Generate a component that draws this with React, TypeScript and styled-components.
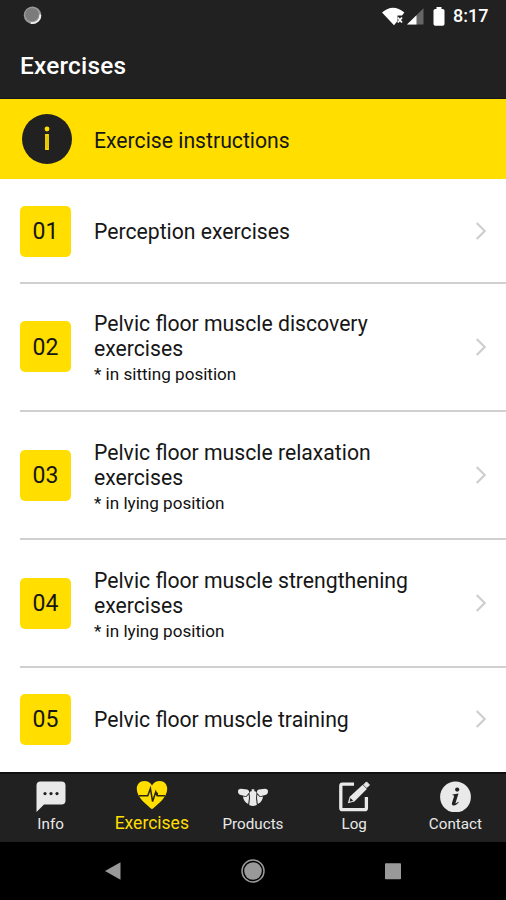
import React from 'react';
import styled, { createGlobalStyle } from 'styled-components';

const GlobalStyle = createGlobalStyle`
  * { box-sizing: border-box; }
  body { margin: 0; background: #fff; font-family: Roboto, sans-serif; }
`;

const Screen = styled.div`
  width: 506px;
  height: 900px;
  display: flex;
  flex-direction: column;
  overflow: hidden;
  background: #fff;
`;

const StatusBar = styled.div`
  height: 32px;
  flex: none;
  background: #212121;
  color: #fff;
  display: flex;
  align-items: center;
  justify-content: space-between;
  padding: 0 18px 0 23px;
`;

const StatusIcons = styled.div`
  display: flex;
  align-items: center;
`;

const Clock = styled.span`
  font-size: 18px;
  font-weight: 500;
  line-height: 32px;
  width: 35px;
  margin-left: 8px;
  white-space: nowrap;
`;

const Header = styled.header`
  height: 67px;
  flex: none;
  background: #212121;
  border-bottom: 1px solid #141420;
  padding: 18px 20px 0;
`;

const Title = styled.h1`
  margin: 0;
  color: #fff;
  font-size: 24.4px;
  line-height: 32px;
  font-weight: 500;
  letter-spacing: 0.2px;
`;

const Banner = styled.div`
  height: 80px;
  flex: none;
  background: #ffde00;
  display: flex;
  align-items: center;
  padding: 2px 22px 0;
  gap: 22px;
`;

const InfoDisc = styled.div`
  width: 50px;
  height: 50px;
  border-radius: 50%;
  background: #212121;
  display: grid;
  place-items: center;
  margin-bottom: 2px;
`;

const Label = styled.div`
  font-size: 21.2px;
  line-height: 25px;
  color: #161616;
  white-space: pre-line;
`;

const List = styled.main`
  height: 593px;
  flex: none;
  padding-left: 20px;
`;

const Row = styled.div<{ $tall?: boolean; $last?: boolean }>`
  height: ${p => (p.$tall ? '128.3px' : p.$last ? '102px' : '104.6px')};
  border-bottom: ${p => (p.$last ? 'none' : '2px solid #d0d0d0')};
  display: flex;
  align-items: center;
  padding-top: ${p => (p.$tall || p.$last ? '0' : '2px')};
  padding-right: 19px;
`;

const NumberTile = styled.div`
  width: 51px;
  height: 51px;
  flex: none;
  border-radius: 5px;
  background: #ffde00;
  color: #161616;
  display: grid;
  place-items: center;
  font-size: 23px;
  line-height: 27px;
  padding-top: 1px;
  margin-right: 23px;
`;

const RowText = styled.div<{ $noted: boolean }>`
  flex: 1;
  padding-top: ${p => (p.$noted ? '5px' : '1px')};
`;

const Note = styled.div`
  font-size: 17.1px;
  line-height: 20px;
  padding-top: 3px;
  height: 26px;
  color: #111;
`;

const TabBar = styled.nav`
  height: 70px;
  flex: none;
  background: #212121;
  border-top: 2px solid #101010;
  display: grid;
  grid-template-columns: repeat(5, 1fr);
`;

const Tab = styled.div<{ $active?: boolean }>`
  display: flex;
  flex-direction: column;
  align-items: center;
  color: ${p => (p.$active ? '#ffde00' : '#e9e9e9')};
  font-size: ${p => (p.$active ? '17.5px' : '15.2px')};
  line-height: 20px;
  padding-top: ${p => (p.$active ? '5px' : '6px')};
  svg { display: block; margin-bottom: 2px; }
`;

const SystemNav = styled.div`
  height: 58px;
  flex: none;
  background: #000;
  display: flex;
  justify-content: center;
  align-items: center;
  gap: 116px;
  svg { display: block; }
`;

const Spinner = () => (
  <svg width="20" height="20" viewBox="0 0 20 20">
    <circle cx="9.5" cy="9.2" r="8.7" fill="#999" />
    <path d="M17.3 8.5A8 8 0 0 1 7.8 17" fill="none" stroke="#eee" strokeWidth="1.8" />
    <circle cx="9" cy="8.6" r="6.7" fill="#7b7b7b" />
  </svg>
);

const StatusGlyphs = () => (
  <svg width="64" height="24" viewBox="380 3 64 24">
    <path d="M381 11.5Q392 2 403.4 11.5L401 14.5H396.5V20L393 24.2Z" fill="#fff" />
    <path d="m396.8 16.5 4.2 5m0-5-4.2 5" stroke="#fff" strokeWidth="1.8" />
    <path d="M422.5 7.2V23.5H406Z" fill="#666" />
    <path d="M415.5 14.2V23.5H406Z" fill="#fff" />
    <path d="M435.5 6h5v2h1.2q1.8 0 1.8 1.8V23q0 1.8-1.8 1.8h-7.4q-1.8 0-1.8-1.8V9.8q0-1.8 1.8-1.8h1.2Z" fill="#fff" />
  </svg>
);

const InfoGlyph = () => (
  <svg width="10" height="26" viewBox="0 0 10 26">
    <circle cx="5" cy="3" r="2.4" fill="#ffde00" />
    <path d="M5 8v16" stroke="#ffde00" strokeWidth="3.8" />
    <path d="M5 9.5v13" stroke="#c4ad10" strokeWidth="0.9" />
  </svg>
);

const Chevron = () => (
  <svg width="12" height="20" viewBox="0 0 12 20">
    <path d="m1.7 2 8 8-8 8" fill="none" stroke="#cecece" strokeWidth="2.2" />
  </svg>
);

const ChatIcon = () => (
  <svg width="32" height="32" viewBox="0 0 32 32">
    <path d="M5.5 1.5h21q4 0 4 4v15q0 4-4 4H9L1.5 32V5.5q0-4 4-4Z" fill="#e9e9e9" />
    <g fill="#212121"><circle cx="10" cy="13.6" r="1.6" /><circle cx="16" cy="13.6" r="1.6" /><circle cx="22" cy="13.6" r="1.6" /></g>
  </svg>
);

const HeartIcon = () => (
  <svg width="32" height="32" viewBox="0 0 32 32">
    <path d="M16 30.2C10.5 25.6 1 18.6.8 10.2.6 5.4 4 2 8.2 2 12 2 14.8 4 16 6.6 17.2 4 20 2 23.8 2c4.2 0 7.6 3.4 7.4 8.2C31 18.6 21.5 25.6 16 30.2Z" fill="#ffde00" />
    <path d="M3 16.7h8.8l2.6-7.2 2.2 13 3.2-9.7 1.4 3.9H29" fill="none" stroke="#282411" strokeWidth="1.5" />
    <circle cx="20.6" cy="14.7" r="1.5" fill="#282411" />
  </svg>
);

const ProductIcon = () => (
  <svg width="32" height="32" viewBox="0 0 32 32" fill="#e9e9e9">
    <path d="M1 11.2Q1 8.8 4 8.7l6.2.8q2.2.4 2 3L9 16.3 3.7 15Q1 14.4 1 11.2Z" />
    <path d="M31 11.2Q31 8.8 28 8.7l-6.2.8q-2.2.4-2 3l3.2 3.8 5.3-1.3Q31 14.4 31 11.2Z" />
    <path d="M13.8 11.2h1l-.2-2h2.8l-.2 2h1q1.3.4 1.3 2L19 18l.8 7q-3.8 1.8-7.6 0l.8-7-.5-4.8q0-1.6 1.3-2Z" />
    <path d="m6 16.4 3.2.7 2.5-2.5.3 3.5-.8 5.9Q6.5 21.5 6 16.4ZM26 16.4l-3.2.7-2.5-2.5-.3 3.5.8 5.9q4.7-2.5 5.2-7.6Z" />
  </svg>
);

const EditIcon = () => (
  <svg width="32" height="32" viewBox="0 0 32 32">
    <path d="M16 4.2H4.5Q2.8 4.2 2.8 5.9v22q0 1.7 1.7 1.7h22.2q1.7 0 1.7-1.7V17" fill="none" stroke="#e9e9e9" strokeWidth="3.3" />
    <path d="m25.8 4.6 2.7-2.7 3 3-2.7 2.7Z" fill="#e9e9e9" stroke="#e9e9e9" strokeLinejoin="round" />
    <path d="m24.7 4.7 4.2 4.2L16.4 21.4l-6.6 1.8 1.9-6.5Z" fill="#e9e9e9" />
    <path d="m12.4 18 2.8 2.8-3.5 1Z" fill="#212121" />
  </svg>
);

const ContactIcon = () => (
  <svg width="32" height="32" viewBox="0 0 32 32">
    <circle cx="16.5" cy="17" r="15.4" fill="#e9e9e9" />
    <circle cx="18.2" cy="9.6" r="2.1" fill="#212121" />
    <path d="M13.5 14.4l6-1-3 9.6q-.2 1.3 2.7-1.3l.5.7q-3.2 3.5-5.3 3.2-2.1-.4-1.3-3l2-6.3q.4-1.1-1.6-1Z" fill="#212121" />
  </svg>
);

const exercises = [
  { no: '01', title: 'Perception exercises' },
  { no: '02', title: 'Pelvic floor muscle discovery\nexercises', note: '* in sitting position' },
  { no: '03', title: 'Pelvic floor muscle relaxation\nexercises', note: '* in lying position' },
  { no: '04', title: 'Pelvic floor muscle strengthening\nexercises', note: '* in lying position' },
  { no: '05', title: 'Pelvic floor muscle training' },
];

const tabs = [
  { name: 'Info', Icon: ChatIcon },
  { name: 'Exercises', Icon: HeartIcon, active: true },
  { name: 'Products', Icon: ProductIcon },
  { name: 'Log', Icon: EditIcon },
  { name: 'Contact', Icon: ContactIcon },
];

export default function App() {
  return (
    <>
      <GlobalStyle />
      <Screen>
        <StatusBar>
          <Spinner />
          <StatusIcons>
            <StatusGlyphs />
            <Clock>8:17</Clock>
          </StatusIcons>
        </StatusBar>
        <Header><Title>Exercises</Title></Header>
        <Banner>
          <InfoDisc><InfoGlyph /></InfoDisc>
          <Label>Exercise instructions</Label>
        </Banner>
        <List>
          {exercises.map(({ no, title, note }, i) => (
            <Row key={no} $tall={!!note} $last={i === exercises.length - 1}>
              <NumberTile>{no}</NumberTile>
              <RowText $noted={!!note}>
                <Label>{title}</Label>
                {note && <Note>{note}</Note>}
              </RowText>
              <Chevron />
            </Row>
          ))}
        </List>
        <TabBar>
          {tabs.map(({ name, Icon, active }) => (
            <Tab key={name} $active={active}><Icon />{name}</Tab>
          ))}
        </TabBar>
        <SystemNav>
          <svg width="24" height="24" viewBox="0 0 24 24"><path d="M4 12 19.5 3.3v17.4Z" fill="#999" /></svg>
          <svg width="24" height="24" viewBox="0 0 24 24"><circle cx="12" cy="12" r="11" fill="none" stroke="#999" strokeWidth="1.5" /><circle cx="12" cy="12" r="8.8" fill="#999" /></svg>
          <svg width="24" height="24" viewBox="0 0 24 24"><rect x="4" y="4.2" width="16" height="16" rx=".8" fill="#999" /></svg>
        </SystemNav>
      </Screen>
    </>
  );
}
